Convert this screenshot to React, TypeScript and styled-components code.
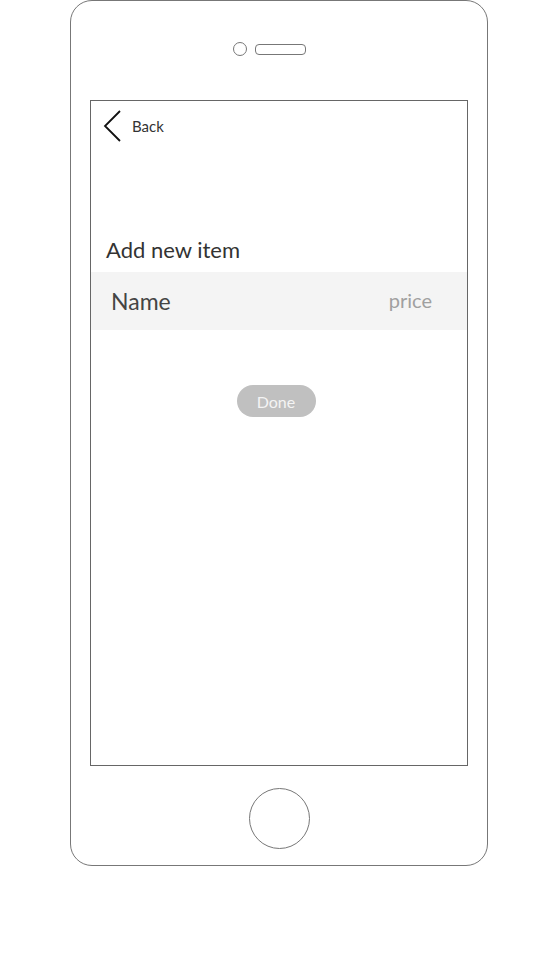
import styled, { createGlobalStyle } from 'styled-components';

const GlobalStyle = createGlobalStyle`
  body {
    margin: 0;
    background: #fff;
    font-family: "Source Sans Pro", Lato, "Open Sans", sans-serif;
  }
`;

const Page = styled.div`
  width: 538px;
  height: 975px;
  padding-left: 70px;
  box-sizing: border-box;
`;

const Phone = styled.div`
  width: 418px;
  height: 866px;
  box-sizing: border-box;
  border: 1px solid #777;
  border-radius: 22px;
  display: flex;
  flex-direction: column;
  padding: 0 19px;
`;

const TopBar = styled.div`
  height: 99px;
  display: flex;
  align-items: center;
  justify-content: center;
  gap: 8px;
  padding-right: 20px;
  padding-bottom: 3px;
  box-sizing: border-box;
`;

const Camera = styled.div`
  width: 14px;
  height: 14px;
  border: 1px solid #777;
  border-radius: 50%;
  box-sizing: border-box;
`;

const Speaker = styled.div`
  width: 51px;
  height: 11px;
  border: 1px solid #777;
  border-radius: 4px;
  box-sizing: border-box;
`;

const Screen = styled.div`
  height: 666px;
  box-sizing: border-box;
  border: 1px solid #666;
  display: flex;
  flex-direction: column;
`;

const NavBar = styled.div`
  display: flex;
  align-items: center;
  gap: 11px;
  padding: 9px 0 0 12px;
  height: 32px;
`;

const BackLabel = styled.span`
  font-size: 15px;
  color: #333;
`;

const Title = styled.div`
  margin: 94px 0 0 15px;
  font-size: 22px;
  color: #333;
  height: 36px;
`;

const ItemRow = styled.div`
  height: 58px;
  background: #f4f4f4;
  display: flex;
  align-items: center;
  justify-content: space-between;
  padding: 0 35px 0 20px;
`;

const NameText = styled.span`
  font-size: 23px;
  color: #444;
`;

const PriceText = styled.span`
  font-size: 20px;
  color: #a0a0a0;
  margin-bottom: 2px;
`;

const Footer = styled.div`
  display: flex;
  justify-content: center;
  padding-top: 55px;
  padding-right: 6px;
`;

const DoneButton = styled.button`
  width: 79px;
  height: 32px;
  border: none;
  border-radius: 16px;
  background: #c0c0c0;
  color: #f4f4f4;
  font-family: inherit;
  font-size: 16px;
  padding: 0;
`;

const BottomBar = styled.div`
  flex: 1;
  display: flex;
  align-items: center;
  justify-content: center;
  padding-top: 6px;
`;

const HomeButton = styled.div`
  width: 61px;
  height: 61px;
  border: 1px solid #777;
  border-radius: 50%;
  box-sizing: border-box;
`;

const Chevron = () => (
  <svg width="18" height="32" viewBox="0 0 18 32">
    <path d="M17 1 L2 16 L17 31" fill="none" stroke="#111" strokeWidth="1.8" />
  </svg>
);

export default function App() {
  return (
    <Page>
      <GlobalStyle />
      <Phone>
        <TopBar>
          <Camera />
          <Speaker />
        </TopBar>
        <Screen>
          <NavBar>
            <Chevron />
            <BackLabel>Back</BackLabel>
          </NavBar>
          <Title>Add new item</Title>
          <ItemRow>
            <NameText>Name</NameText>
            <PriceText>price</PriceText>
          </ItemRow>
          <Footer>
            <DoneButton>Done</DoneButton>
          </Footer>
        </Screen>
        <BottomBar>
          <HomeButton />
        </BottomBar>
      </Phone>
    </Page>
  );
}
